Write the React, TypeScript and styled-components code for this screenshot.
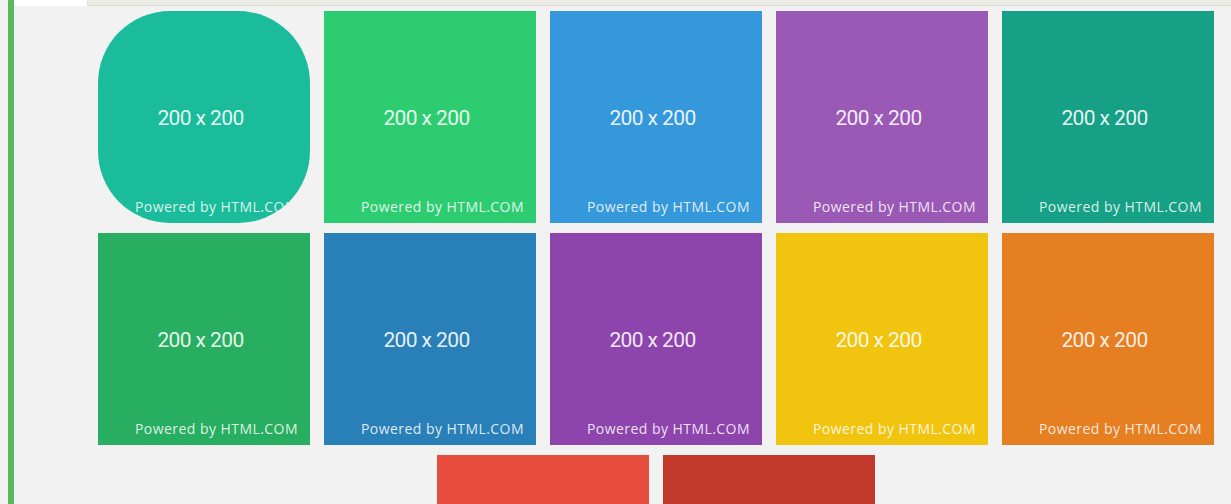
import React from "react";
import styled, { createGlobalStyle } from "styled-components";

const GlobalStyle = createGlobalStyle`
  html, body {
    margin: 0;
    padding: 0;
    background: #f2f2f2;
    overflow: hidden;
  }
  body {
    font-family: "Open Sans", "Liberation Sans", sans-serif;
  }
`;

const tiles: { color: string; round?: boolean }[] = [
  { color: "#1abc9c", round: true },
  { color: "#2ecc71" },
  { color: "#3498db" },
  { color: "#9b59b6" },
  { color: "#16a085" },
  { color: "#27ae60" },
  { color: "#2980b9" },
  { color: "#8e44ad" },
  { color: "#f1c40f" },
  { color: "#e67e22" },
  { color: "#e74c3c" },
  { color: "#c0392b" },
];

export default function App() {
  return (
    <>
      <GlobalStyle />
      <Page>
        <Panel>
          <TabStrip>
            <ActiveTab />
            <TabRest />
          </TabStrip>
          <Gallery>
            {tiles.map((t, i) => (
              <Tile key={i} color={t.color} $round={t.round}>
                <Size>200 x 200</Size>
                <Credit>Powered by HTML.COM</Credit>
              </Tile>
            ))}
          </Gallery>
        </Panel>
      </Page>
    </>
  );
}

const Page = styled.div`
  padding-left: 8px;
  height: 504px;
  overflow: hidden;
`;

const Panel = styled.div`
  border-left: 6px solid #5cb85c;
  min-height: 100%;
  display: flex;
  flex-direction: column;
`;

const TabStrip = styled.div`
  display: flex;
  flex-shrink: 0;
  height: 6px;
`;

const ActiveTab = styled.div`
  width: 73px;
  background: #ffffff;
`;

const TabRest = styled.div`
  flex: 1;
  background: #ecece7;
  border-bottom: 1px solid #dcdcd6;
  border-left: 1px solid #e2e2dc;
`;

const Gallery = styled.div`
  flex-shrink: 0;
  margin: 5px 0 0 84px;
  width: 1116px;
  display: flex;
  flex-wrap: wrap;
  justify-content: center;
  column-gap: 14px;
  row-gap: 10px;
`;

type TileProps = { color: string; $round?: boolean };

const Tile = styled.div<TileProps>`
  position: relative;
  flex-shrink: 0;
  width: 212px;
  height: 212px;
  background: ${(p) => p.color};
  border-radius: ${(p) => (p.$round ? "72px" : "0")};
  overflow: hidden;
  display: flex;
  align-items: center;
  justify-content: center;
`;

const Size = styled.span`
  font-family: Roboto, "Liberation Sans", sans-serif;
  font-size: 21px;
  letter-spacing: -0.6px;
  color: rgba(255, 255, 255, 0.9);
  margin: 2px 7px 0 0;
`;

const Credit = styled.span`
  position: absolute;
  right: 12px;
  bottom: 7px;
  font-family: "Open Sans", sans-serif;
  font-size: 14px;
  letter-spacing: 0.45px;
  color: rgba(255, 255, 255, 0.85);
`;
